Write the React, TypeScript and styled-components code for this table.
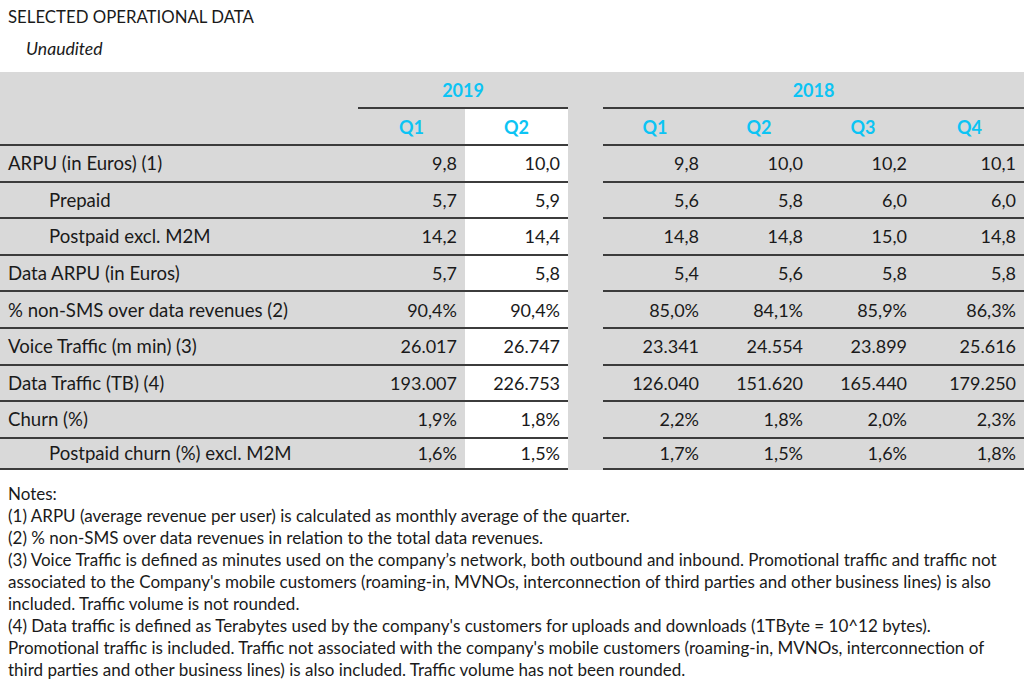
import styled, { createGlobalStyle } from "styled-components";

const GlobalStyle = createGlobalStyle`
  body {
    margin: 0;
    background: #ffffff;
    color: #1a1a1a;
    font-family: Lato, "Open Sans", sans-serif;
  }
`;

const Page = styled.div`
  width: 1024px;
  height: 686px;
  overflow: hidden;
`;

const Title = styled.h1`
  margin: 0;
  padding: 5px 0 0 8px;
  height: 31px;
  box-sizing: border-box;
  font-size: 16.8px;
  font-weight: 400;
  line-height: 24px;
`;

const Subtitle = styled.p`
  margin: 0;
  padding: 8px 0 0 26px;
  height: 41px;
  box-sizing: border-box;
  font-size: 17.6px;
  font-style: italic;
  line-height: 20px;
`;

const Table = styled.table`
  width: 1024px;
  border-collapse: collapse;
  table-layout: fixed;
  background: #d9d9d9;
  font-size: 18px;
`;

const Row = styled.tr<{ $h: number }>`
  height: ${(p) => p.$h}px;
`;

const Cell = styled.td<{ $line?: boolean; $white?: boolean; $indent?: boolean }>`
  padding: 0 8px 0 ${(p) => (p.$indent ? "49px" : "8px")};
  text-align: right;
  white-space: nowrap;
  background: ${(p) => (p.$white ? "#ffffff" : "transparent")};
  border-bottom: ${(p) => (p.$line ? "2px solid #3c3c3c" : "none")};
  &:first-child {
    text-align: left;
    font-size: 18.6px;
  }
`;

const Head = styled.th<{ $line?: boolean; $white?: boolean }>`
  padding: 0;
  text-align: center;
  color: #0cc4f4;
  font-weight: 700;
  font-size: 18px;
  background: ${(p) => (p.$white ? "#ffffff" : "transparent")};
  border-bottom: ${(p) => (p.$line ? "2px solid #3c3c3c" : "none")};
`;

const Notes = styled.div`
  padding: 13px 0 0 8px;
  font-size: 17px;
  line-height: 22px;
  white-space: nowrap;
`;

const colWidths = [358, 107, 103, 35, 104, 104, 104, 109];

type DataRow = { label: string; indent?: boolean; y2019: string[]; y2018: string[] };

const rows: DataRow[] = [
  { label: "ARPU (in Euros) (1)", y2019: ["9,8", "10,0"], y2018: ["9,8", "10,0", "10,2", "10,1"] },
  { label: "Prepaid", indent: true, y2019: ["5,7", "5,9"], y2018: ["5,6", "5,8", "6,0", "6,0"] },
  { label: "Postpaid excl. M2M", indent: true, y2019: ["14,2", "14,4"], y2018: ["14,8", "14,8", "15,0", "14,8"] },
  { label: "Data ARPU (in Euros)", y2019: ["5,7", "5,8"], y2018: ["5,4", "5,6", "5,8", "5,8"] },
  { label: "% non-SMS over data revenues (2)", y2019: ["90,4%", "90,4%"], y2018: ["85,0%", "84,1%", "85,9%", "86,3%"] },
  { label: "Voice Traffic (m min) (3)", y2019: ["26.017", "26.747"], y2018: ["23.341", "24.554", "23.899", "25.616"] },
  { label: "Data Traffic (TB) (4)", y2019: ["193.007", "226.753"], y2018: ["126.040", "151.620", "165.440", "179.250"] },
  { label: "Churn (%)", y2019: ["1,9%", "1,8%"], y2018: ["2,2%", "1,8%", "2,0%", "2,3%"] },
  { label: "Postpaid churn (%) excl. M2M", indent: true, y2019: ["1,6%", "1,5%"], y2018: ["1,7%", "1,5%", "1,6%", "1,8%"] },
];

const notes = [
  "Notes:",
  "(1) ARPU (average revenue per user) is calculated as monthly average of the quarter.",
  "(2) % non-SMS over data revenues in relation to the total data revenues.",
  "(3) Voice Traffic is defined as minutes used on the company’s network, both outbound and inbound. Promotional traffic and traffic not",
  "associated to the Company's mobile customers (roaming-in, MVNOs, interconnection of third parties and other business lines) is also",
  "included. Traffic volume is not rounded.",
  "(4) Data traffic is defined as Terabytes used by the company's customers for uploads and downloads (1TByte = 10^12 bytes).",
  "Promotional traffic is included. Traffic not associated with the company's mobile customers (roaming-in, MVNOs, interconnection of",
  "third parties and other business lines) is also included. Traffic volume has not been rounded.",
];

export default function App() {
  return (
    <Page>
      <GlobalStyle />
      <Title>SELECTED OPERATIONAL DATA</Title>
      <Subtitle>Unaudited</Subtitle>
      <Table>
        <colgroup>
          {colWidths.map((w, i) => (
            <col key={i} style={{ width: w }} />
          ))}
        </colgroup>
        <thead>
          <Row $h={36}>
            <Head />
            <Head colSpan={2} $line>
              2019
            </Head>
            <Head />
            <Head colSpan={4} $line>
              2018
            </Head>
          </Row>
          <Row $h={37}>
            <Head $line />
            <Head $line>Q1</Head>
            <Head $line $white>
              Q2
            </Head>
            <Head />
            <Head $line>Q1</Head>
            <Head $line>Q2</Head>
            <Head $line>Q3</Head>
            <Head $line>Q4</Head>
          </Row>
        </thead>
        <tbody>
          {rows.map((r, i) => (
            <Row key={r.label} $h={i === rows.length - 1 ? 31 : 36.6}>
              <Cell $line $indent={r.indent}>
                {r.label}
              </Cell>
              <Cell $line>{r.y2019[0]}</Cell>
              <Cell $line $white>
                {r.y2019[1]}
              </Cell>
              <Cell />
              {r.y2018.map((v, j) => (
                <Cell key={j} $line>
                  {v}
                </Cell>
              ))}
            </Row>
          ))}
        </tbody>
      </Table>
      <Notes>
        {notes.map((n) => (
          <div key={n}>{n}</div>
        ))}
      </Notes>
    </Page>
  );
}
